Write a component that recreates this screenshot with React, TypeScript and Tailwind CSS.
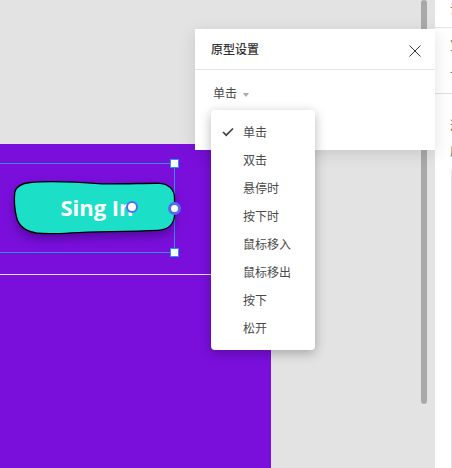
const menuItems = ["单击", "双击", "悬停时", "按下时", "鼠标移入", "鼠标移出", "按下", "松开"];

function Handle({ className }: { className: string }) {
  return <div className={`absolute right-[-5px] h-[9px] w-[9px] border border-[#2196f3] bg-white ${className}`} />;
}

function SignInButton() {
  return (
    <div className="relative ml-[12px] flex h-[58px] w-[166px] items-center justify-center">
      <svg className="absolute inset-0 drop-shadow-[0_5px_5px_rgba(40,0,90,0.45)]" width="166" height="58" viewBox="0 0 166 58">
        <path
          d="M18 3.500C40 1.500 62 2.800 90 4.800C115 5 135 4 148 4.300C157 5 162.500 11 162.500 19L162.500 37C161.500 46 155 50.800 146 51.300C115 52.500 85 52.800 60 53.800C45 54.800 32 55 24 54C13 52 6.500 47 4.500 38C2.500 30 2 20 2.800 13C4.500 7 10 4.300 18 3.500Z"
          fill="#1bdfc6"
          stroke="#000"
          strokeWidth="1.300"
        />
      </svg>
      <span className="relative mb-[3px] ml-[8px] font-['Open_Sans',sans-serif] text-[22px] leading-[30px] font-bold text-white">
        Sing In
      </span>
      <div className="absolute left-[114px] top-[22px] h-[12px] w-[12px] rounded-full border-2 border-[#4f6ef7] bg-white" />
    </div>
  );
}

export default function App() {
  return (
    <div className="flex h-[468px] w-[452px] overflow-hidden bg-white font-['Roboto','Noto_Sans_CJK_SC',sans-serif]">
      <main className="relative flex h-full w-[435px] flex-col bg-[#e3e3e3] pt-[144px]">
        {/* scrollbar */}
        <div className="absolute left-[421px] top-0 h-[404px] w-[6px] rounded-full bg-[#a9a9a9]" />

        {/* artboard */}
        <div className="w-[271px] flex-1 bg-[#7a0fdc] pt-[19px]">
          {/* selection */}
          <div className="relative flex h-[90px] w-[175px] items-center border-y border-r border-[#2f8fe8]">
            <SignInButton />
            <Handle className="top-[-5px]" />
            <Handle className="bottom-[-5px]" />
            <div className="absolute right-[-7px] top-[38px] h-[13px] w-[13px] rounded-full border-[3px] border-[#4f6ef7] bg-white" />
          </div>
          <div className="mt-[21px] h-px w-full bg-[#e6dcf5]" />
        </div>

        {/* prototype dialog */}
        <section className="absolute left-[195px] top-[29px] h-[121px] w-[240px] bg-white shadow-[0_4px_16px_rgba(0,0,0,0.12)]">
          <header className="flex h-[41px] items-center justify-between border-b border-[#e5e5e5] pl-[16px] pr-[13px]">
            <h2 className="mt-[2px] text-[12px] font-medium text-[#333]">原型设置</h2>
            <svg width="14" height="14" viewBox="0 0 14 14" className="mt-[4px]" fill="none" stroke="#333" strokeWidth="1">
              <path d="M1.500 1.500L12.500 12.500M12.500 1.500L1.500 12.500" />
            </svg>
          </header>
          <div className="flex items-center gap-[6px] pl-[18px] pt-[16px] text-[12px] leading-[16px] text-[#4a4a4a]">
            <span>单击</span>
            <span className="mt-[2px] h-0 w-0 border-x-[3px] border-t-[4px] border-x-transparent border-t-[#aaa]" />
          </div>
        </section>

        {/* trigger menu */}
        <ul className="absolute left-[211px] top-[110px] w-[104px] rounded-[4px] bg-white pb-[7px] pt-[9px] text-[12px] text-[#4a4a4a] shadow-[0_3px_12px_rgba(0,0,0,0.28)]">
          {menuItems.map((item, i) => (
            <li key={item} className="relative flex h-[28px] items-center pl-[32px]">
              {i === 0 && (
                <svg className="absolute left-[11px] top-[8px]" width="12" height="10" viewBox="0 0 12 10" fill="none" stroke="#444" strokeWidth="1.700">
                  <path d="M1 5L4.200 8.200L11 1.500" />
                </svg>
              )}
              {item}
            </li>
          ))}
        </ul>
      </main>

      {/* right panel, cut off by the window */}
      <aside className="flex h-full w-[17px] flex-col bg-white text-[12px] text-[#666]">
        <div className="h-[28px] border-b border-[#e5e5e5] pl-[15px] pt-[2px] leading-[16px]">设</div>
        <div className="h-[66px] border-b border-[#e0e0e0] pl-[15px] pt-[10px] leading-[16px]">
          <div>宽</div>
          <div className="mt-[12px]">十</div>
        </div>
        <div className="pl-[15px] pt-[24px] leading-[16px]">
          <div>透</div>
          <div className="mt-[10px]">度</div>
        </div>
        <div className="ml-[16px] mt-[10px] flex-1 border-l border-[#e5e5e5]" />
      </aside>
    </div>
  );
}
